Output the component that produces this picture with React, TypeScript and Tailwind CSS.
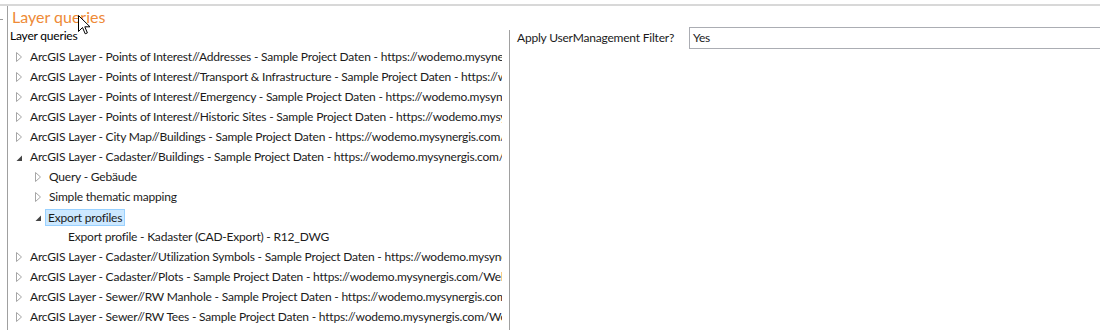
import React from "react";

type Node = { label: string; level: number; state: "collapsed" | "expanded" | "leaf"; selected?: boolean };

const url = " - Sample Project Daten - https://wodemo.mysynergis.com/WebOffice/synserver";

const nodes: Node[] = [
  { label: "ArcGIS Layer - Points of Interest//Addresses" + url, level: 0, state: "collapsed" },
  { label: "ArcGIS Layer - Points of Interest//Transport & Infrastructure" + url, level: 0, state: "collapsed" },
  { label: "ArcGIS Layer - Points of Interest//Emergency" + url, level: 0, state: "collapsed" },
  { label: "ArcGIS Layer - Points of Interest//Historic Sites" + url, level: 0, state: "collapsed" },
  { label: "ArcGIS Layer - City Map//Buildings" + url, level: 0, state: "collapsed" },
  { label: "ArcGIS Layer - Cadaster//Buildings" + url, level: 0, state: "expanded" },
  { label: "Query - Gebäude", level: 1, state: "collapsed" },
  { label: "Simple thematic mapping", level: 1, state: "collapsed" },
  { label: "Export profiles", level: 1, state: "expanded", selected: true },
  { label: "Export profile - Kadaster (CAD-Export) - R12_DWG", level: 2, state: "leaf" },
  { label: "ArcGIS Layer - Cadaster//Utilization Symbols" + url, level: 0, state: "collapsed" },
  { label: "ArcGIS Layer - Cadaster//Plots" + url, level: 0, state: "collapsed" },
  { label: "ArcGIS Layer - Sewer//RW Manhole" + url, level: 0, state: "collapsed" },
  { label: "ArcGIS Layer - Sewer//RW Tees" + url, level: 0, state: "collapsed" },
];

const indentClass = ["pl-[8px]", "pl-[27px]", "pl-[46px]"];

function Arrow({ state }: { state: Node["state"] }) {
  if (state === "collapsed") {
    return (
      <svg width="7" height="10" viewBox="0 0 7 10">
        <polygon points="0.5,0.5 5.5,5 0.5,9.5" fill="none" stroke="#a6a6a6" strokeWidth="1" />
      </svg>
    );
  }
  if (state === "expanded") {
    return (
      <svg width="7" height="7" viewBox="0 0 7 7" className="mt-[2px]">
        <polygon points="6,0.5 6,6 0.5,6" fill="#454545" />
      </svg>
    );
  }
  return null;
}

function Row({ node }: { node: Node }) {
  return (
    <div className={`flex h-[20px] items-center whitespace-nowrap ${indentClass[node.level]}`}>
      <div className="flex w-[14px] shrink-0 items-center">
        <Arrow state={node.state} />
      </div>
      <div
        className={
          node.selected
            ? "-ml-[4px] h-[17px] border border-[#99d1ff] bg-[#cce8ff] px-[2px] leading-[15px]"
            : "leading-[20px]"
        }
      >
        {node.label}
      </div>
    </div>
  );
}

export default function App() {
  return (
    <div
      className="relative h-[330px] w-[1100px] overflow-hidden bg-white text-[12px] tracking-[-0.2px] text-[#1b1b1b]"
      style={{ fontFamily: 'Lato, "Noto Sans", sans-serif' }}
    >
      <div className="h-[4px]" />
      <div className="h-[2px] bg-[#d8d8d8]" />
      <div className="flex">
        <div className="relative w-[7px] shrink-0">
          <div className="mt-[13px] h-px w-[3px] bg-[#9a9a9a]" />
        </div>
        <div className="flex h-[330px] flex-1 flex-col border-l border-[#a0a0a0]">
          <div className="h-[21px] pl-[4px] text-[16px] leading-[21px] tracking-normal text-[#ee8a37]">Layer queries</div>
          <div className="flex flex-1">
            <div className="w-[501px] shrink-0 pr-[7px]">
              <div className="overflow-hidden">
                <div className="h-[20px] pl-[2px] leading-[18px] text-black">Layer queries</div>
                {nodes.map((n, i) => (
                  <Row key={i} node={n} />
                ))}
              </div>
            </div>
            <div className="mt-[3px] w-px shrink-0 self-stretch bg-[#a0a0a0]" />
            <div className="flex flex-1 items-start pl-[7px]">
              <div className="flex h-[22px] items-center">
                <div className="w-[172px] shrink-0 whitespace-nowrap">Apply UserManagement Filter?</div>
                <div className="flex h-[22px] w-[600px] shrink-0 items-center border border-[#abadb3] pl-[3px]">Yes</div>
              </div>
            </div>
          </div>
        </div>
      </div>
      <svg className="absolute left-[78px] top-[15px]" width="13" height="21" viewBox="0 0 13 21">
        <path
          d="M0.5 0.5 L0.5 16.5 L4.5 12.5 L7.2 18.8 L9.4 17.9 L6.8 11.8 L12 11.8 Z"
          fill="#ffffff"
          stroke="#000000"
          strokeWidth="1"
          strokeLinejoin="round"
        />
      </svg>
    </div>
  );
}
